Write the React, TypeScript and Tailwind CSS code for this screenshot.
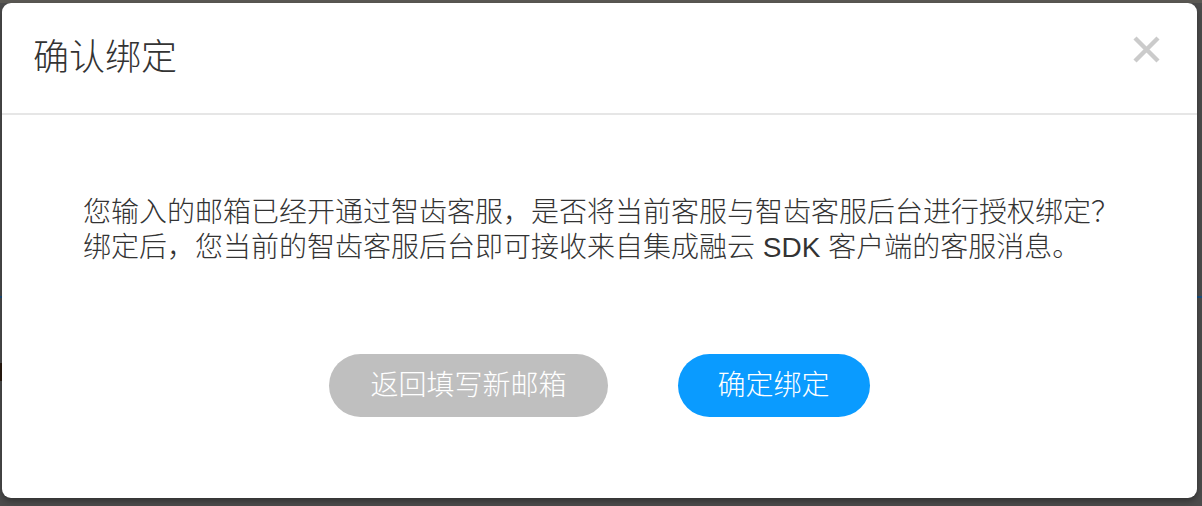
function ConfirmBindModal({ onClose, onBack, onConfirm }: {
  onClose?: () => void
  onBack?: () => void
  onConfirm?: () => void
}) {
  return (
    <div className="absolute left-[2px] top-[3px] right-[5px] bottom-[8px] flex flex-col bg-white rounded-[9px] shadow-[0_3px_6px_rgba(0,0,0,0.35)]">
      <div className="h-[112px] shrink-0 flex items-center justify-between pl-[31px] pr-[37px] border-b-2 border-[#e6e6e6]">
        <h2 className="text-[36px] leading-none text-[#333] font-light">确认绑定</h2>
        <button onClick={onClose} className="-mt-[18px]">
          <svg width="27" height="27" viewBox="0 0 27 27" fill="none" stroke="#cbcbcb" strokeWidth="4.4">
            <path d="M2 2 25 25M25 2 2 25" />
          </svg>
        </button>
      </div>
      <div className="flex-1 flex flex-col">
        <div className="pt-[81px] pl-[81px] pr-[40px] text-[28px] leading-[34px] text-[#333] font-light">
          <p>您输入的邮箱已经开通过智齿客服，是否将当前客服与智齿客服后台进行授权绑定？</p>
          <p className="mt-[1px]">绑定后，您当前的智齿客服后台即可接收来自集成融云 SDK 客户端的客服消息。</p>
        </div>
        <div className="mt-[89px] flex justify-center gap-[70px]">
          <button onClick={onBack} className="h-[63px] px-[41px] rounded-full bg-[#bfbfbf] text-white text-[28px] font-light">返回填写新邮箱</button>
          <button onClick={onConfirm} className="h-[63px] px-[40px] rounded-full bg-[#0a9bff] text-white text-[28px] font-light">确定绑定</button>
        </div>
      </div>
    </div>
  )
}

export default function App() {
  return (
    <div
      className="relative w-[1202px] h-[506px] overflow-hidden bg-[#4c4c4c]"
      style={{ fontFamily: '"Liberation Sans", "Noto Sans CJK SC", sans-serif' }}
    >
      {/* page behind the overlay */}
      <div className="flex flex-col">
        <div className="h-[3px] bg-[#5b5954]" />
        <div className="h-[293px]" />
        <div className="h-[2px] bg-[#1b4f80]" />
        <div className="h-[65px]" />
        <div className="h-[18px] w-[8px] bg-[#2a1a10]" />
      </div>
      <ConfirmBindModal />
    </div>
  )
}
